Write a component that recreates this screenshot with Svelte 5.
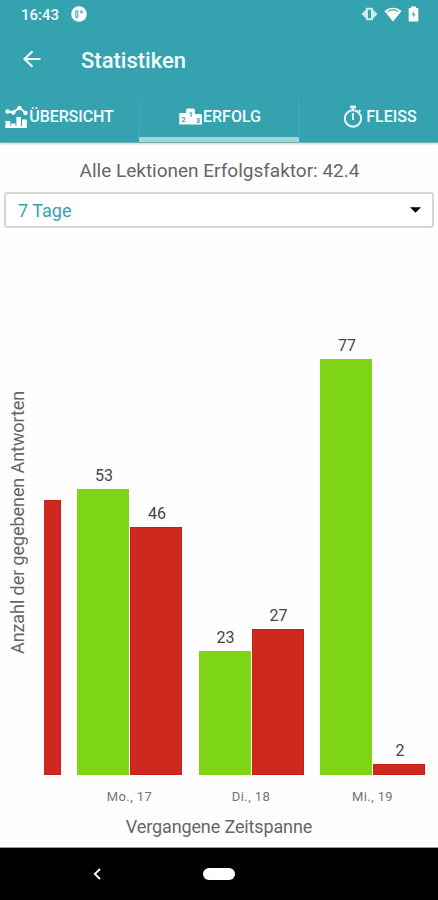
<script lang="ts">
  type Day = {
    label: string;
    correct: number;
    wrong: number;
    clipped?: boolean;
  };

  const days: Day[] = [
    { label: "", correct: 0, wrong: 51, clipped: true },
    { label: "Mo., 17", correct: 53, wrong: 46 },
    { label: "Di., 18", correct: 23, wrong: 27 },
    { label: "Mi., 19", correct: 77, wrong: 2 },
  ];

  const tabs = [
    { id: "overview", label: "ÜBERSICHT" },
    { id: "success", label: "ERFOLG" },
    { id: "effort", label: "FLEISS" },
  ];

  const PX_PER_ANSWER = 5.4;

  let activeTab = $state("success");
</script>

<div class="screen">
  <header>
    <div class="status-bar">
      <span class="clock">16:43</span>
      <svg class="app-badge" width="16" height="16" viewBox="0 0 16 16">
        <circle cx="8" cy="8" r="7.8" fill="#fff" />
        <path d="M4.2 4.2h3.2v7.3a2 2 0 0 1-3.2 0zM9.2 4.4h2.6v2.8H9.2z" fill="#5fb6bf" />
        <path d="M5.8 5.5v5" stroke="#d8eff1" stroke-width="0.8" />
      </svg>
      <div class="status-icons">
        <svg width="17" height="14" viewBox="0 0 17 14">
          <path d="M5 .8h7v1.700L16.500 7 12 11.500v1.700H5v-1.700L.5 7 5 2.500z" fill="#cdebeb" />
          <rect x="7" y="2.800" width="3" height="8.400" fill="#35a3af" />
        </svg>
        <svg width="18" height="15" viewBox="0 0 18 15">
          <path d="M.4 4Q9-2.600 17.600 4L9 14.600z" fill="#fff" />
          <path d="M3.500 4.500Q9 1 14.500 4.500" fill="none" stroke="#60b6be" stroke-width="1.300" />
        </svg>
        <svg width="11" height="16" viewBox="0 0 11 16">
          <path d="M3 .5h5V2h2.300v13.500H.700V2H3z" fill="#fff" />
          <path d="M6 5 3.600 9h1.700v3l2.300-4H6z" fill="#55b0ba" />
        </svg>
      </div>
    </div>

    <div class="app-bar">
      <svg class="back" width="20" height="20" viewBox="0 0 20 20">
        <path d="M18.500 9H2.500M10.500 1.200 2.500 9l8 7.800" fill="none" stroke="#f1fdfd" stroke-width="2.100" />
      </svg>
      <h1>Statistiken</h1>
    </div>

    <nav>
      <div class="tab-strip">
        {#each tabs as tab}
          <button
            class="tab {tab.id}"
            class:active={activeTab === tab.id}
            onclick={() => (activeTab = tab.id)}
          >
            {#if tab.id === "overview"}
              <svg width="23" height="24" viewBox="0 0 23 24">
                <path d="M2 6.500 8.200 7.500 14.500 2.600 20.500 8" fill="none" stroke="#fff" stroke-width="1.800" />
                <g fill="#fff">
                  <circle cx="2.600" cy="6.500" r="2.300" />
                  <circle cx="8.300" cy="7.500" r="2.200" />
                  <circle cx="14.500" cy="3" r="2.300" />
                  <circle cx="20.500" cy="8" r="2.200" />
                  <path d="M.5 16h4.800v7H.5zM6.200 18.500h4.300V23H6.200zM11.400 12h4.600v11h-4.600zM17 14.500h4.800V23H17z" />
                  <path d="M.5 21h21.300v2H.5z" />
                </g>
              </svg>
            {:else if tab.id === "success"}
              <svg width="24" height="17" viewBox="0 0 24 17">
                <path d="M1 5h6V2.500Q7 .5 9 .5h5q2 0 2 2V6h5.500q1.500 0 1.500 1.500v9H.3V6Q.3 5 1 5z" fill="#fff" />
                <g class="rank">
                  <text x="2.500" y="13.500">2</text>
                  <text x="9.800" y="8.800">1</text>
                  <text x="17" y="14.500">3</text>
                </g>
              </svg>
            {:else}
              <svg width="20" height="24" viewBox="0 0 20 24">
                <circle cx="10" cy="13.500" r="8.200" fill="none" stroke="#e6f8f9" stroke-width="2" />
                <path d="M7 .5h6v3H7z" fill="#d7f0f1" />
                <path d="M10 3v3M10 8v7M15.500 7l2-2" stroke="#d7f0f1" stroke-width="2" />
              </svg>
            {/if}
            <span>{tab.label}</span>
          </button>
        {/each}
      </div>
    </nav>
  </header>

  <main>
    <p class="summary">Alle Lektionen Erfolgsfaktor: 42.4</p>
    <button class="range">
      <span>7 Tage</span>
      <svg width="11" height="6" viewBox="0 0 11 6"><path d="M0 .2h11L5.500 5.800z" /></svg>
    </button>

    <section class="chart">
      <div class="y-title"><span>Anzahl der gegebenen Antworten</span></div>
      <div class="plot">
        {#each days as day}
          <div class="day">
            <div class="bars">
              <div class="column">
                {#if !day.clipped}<span class="value">{day.correct}</span>{/if}
                <div class="bar correct" style="height: {day.correct * PX_PER_ANSWER}px"></div>
              </div>
              <div class="column">
                {#if !day.clipped}<span class="value">{day.wrong}</span>{/if}
                <div class="bar wrong" style="height: {day.wrong * PX_PER_ANSWER}px"></div>
              </div>
            </div>
            <span class="day-label">{day.label}</span>
          </div>
        {/each}
      </div>
    </section>
    <p class="x-title">Vergangene Zeitspanne</p>
  </main>

  <footer>
    <svg class="nav-back" width="8" height="12" viewBox="0 0 8 12">
      <path d="M7 1 1.800 6 7 11" fill="none" stroke="#fff" stroke-width="1.900" />
    </svg>
    <div class="home-pill"></div>
  </footer>
</div>

<style>
  :global(body) {
    margin: 0;
    background: #fff;
  }

  .screen {
    width: 438px;
    height: 900px;
    display: flex;
    flex-direction: column;
    overflow: hidden;
    background: #fefefe;
    font-family: Roboto, "Liberation Sans", sans-serif;
  }

  h1,
  p {
    margin: 0;
  }

  svg {
    display: block;
    flex: none;
  }

  button {
    font-family: inherit;
    border: none;
    background: none;
    padding: 0;
    border-radius: 0;
  }

  header {
    height: 143px;
    flex: none;
    box-sizing: border-box;
    display: flex;
    flex-direction: column;
    background: #35a3af;
    color: #f1fdfd;
    border-bottom: 1px solid #75aeb4;
    box-shadow: 0 1px 2px rgba(0, 0, 0, 0.18);
  }

  .status-bar {
    height: 28px;
    display: flex;
    align-items: center;
    padding: 0 19px 0 21px;
  }

  .clock {
    width: 50px;
    font-size: 15px;
    font-weight: 500;
    padding-top: 2px;
  }

  .status-icons {
    display: flex;
    align-items: center;
    gap: 6px;
    margin-left: auto;
  }

  .app-bar {
    height: 63px;
    display: flex;
    align-items: center;
    padding-left: 22px;
  }

  h1 {
    margin-left: 39px;
    padding-top: 1px;
    font-size: 22px;
    font-weight: 500;
  }

  nav {
    height: 51px;
    display: flex;
    justify-content: center;
    overflow: hidden;
  }

  .tab-strip {
    flex: none;
    display: flex;
  }

  .tab {
    width: 159.5px;
    height: 51px;
    box-sizing: border-box;
    display: flex;
    align-items: center;
    justify-content: center;
    color: #f1fdfd;
    font-size: 16px;
    font-weight: 500;
    border-bottom: 5px solid transparent;
    padding: 5px 0 0 2px;
  }

  .tab.overview {
    gap: 1px;
    padding-left: 0;
    letter-spacing: -0.1px;
  }

  .tab.active {
    border-bottom-color: #a5d4d9;
    background: linear-gradient(#46abb6, #46abb6) left 9px / 1px 35px no-repeat,
      linear-gradient(#46abb6, #46abb6) right 9px / 1px 35px no-repeat;
  }

  .tab.effort {
    gap: 3px;
    padding-left: 3px;
  }

  .rank {
    font-size: 7px;
    font-weight: 700;
    fill: #35a3af;
  }

  main {
    height: 704px;
    display: flex;
    flex-direction: column;
  }

  .summary {
    height: 49px;
    line-height: 55px;
    text-align: center;
    font-size: 19px;
    padding-left: 1px;
    color: #666;
  }

  .range {
    height: 36px;
    margin: 0 4px;
    padding: 0 11px 0 12px;
    display: flex;
    align-items: center;
    justify-content: space-between;
    border: 2px solid #d6d6d6;
    border-radius: 3px;
    background: #fff;
    color: #35a3af;
    font-size: 18px;
  }

  .range svg {
    fill: #000;
  }

  .chart {
    flex: 1;
    display: flex;
    min-height: 0;
  }

  .y-title {
    width: 44px;
    flex: none;
    display: flex;
    justify-content: center;
    box-sizing: border-box;
    padding: 162px 9px 0 0;
  }

  .y-title span {
    writing-mode: vertical-rl;
    transform: rotate(180deg);
    height: 264px;
    white-space: nowrap;
    font-size: 18px;
    letter-spacing: -0.08px;
    color: #666;
  }

  .plot {
    flex: 1;
    display: flex;
    justify-content: flex-end;
    align-items: flex-end;
    gap: 16.5px;
    padding-right: 13px;
    overflow: hidden;
  }

  .day {
    width: 105px;
    flex: none;
  }

  .bars {
    display: flex;
    align-items: flex-end;
    gap: 1px;
  }

  .column {
    flex: 1;
    display: flex;
    flex-direction: column;
    align-items: center;
  }

  .value {
    font-size: 16px;
    line-height: 18px;
    margin-bottom: 4px;
    padding-left: 2px;
    color: #444;
  }

  .bar {
    width: 100%;
    box-sizing: border-box;
  }

  .correct {
    background: #7ed516;
  }

  .wrong {
    background: #cf281f;
    border: 1px solid #cc1c16;
  }

  .day-label {
    display: block;
    height: 36px;
    line-height: 43px;
    text-align: center;
    font-size: 13px;
    letter-spacing: 0.4px;
    color: #757575;
  }

  .x-title {
    height: 36px;
    line-height: 32px;
    text-align: center;
    font-size: 18px;
    letter-spacing: -0.13px;
    color: #666;
  }

  footer {
    flex: 1;
    display: grid;
    grid-template-columns: 1fr auto 1fr;
    align-items: center;
    background: #000;
    border-top: 1px solid #999;
  }

  .nav-back {
    margin-left: 93px;
  }

  .home-pill {
    width: 32px;
    height: 12px;
    border-radius: 6px;
    background: #fff;
  }
</style>
